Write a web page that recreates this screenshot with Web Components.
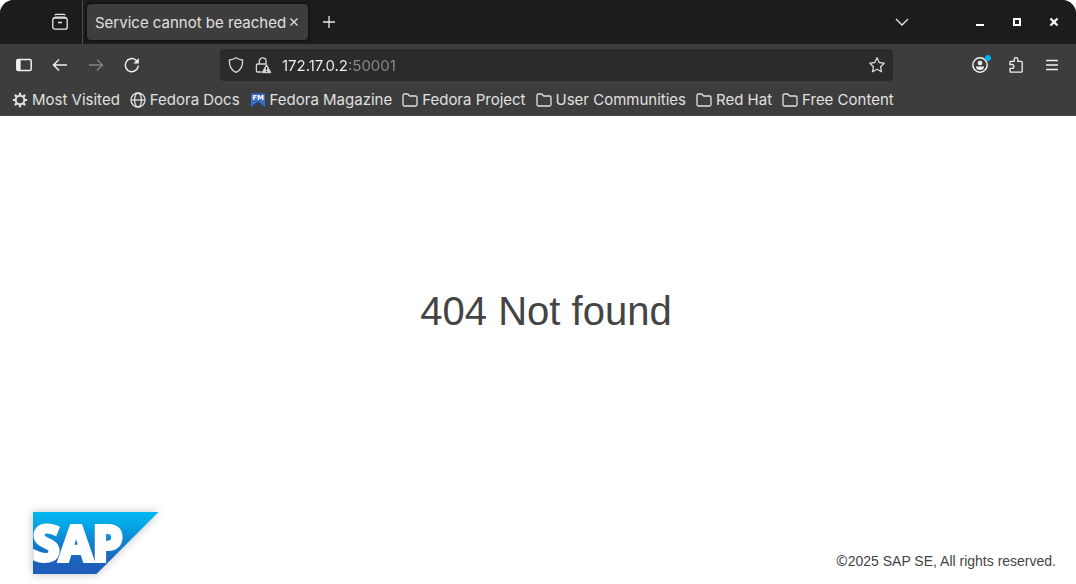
<!DOCTYPE html>
<html lang="en">
<head>
<meta charset="utf-8">
<title>Service cannot be reached</title>
<style>
  html, body { margin: 0; background: #fff; }
  body { min-height: 100vh; display: flex; flex-direction: column; }
  error-page { flex: 1; }
  .mark { font-family: "Noto Sans", sans-serif; }
</style>
</head>
<body>
<browser-chrome></browser-chrome>
<error-page>404 Not found<span slot="legal"><span class="mark">©</span>2025 SAP SE, All rights reserved.</span></error-page>

<script>
const ICONS = {
  view: '<path d="M3 1.300q.3-1 1.500-1h7q1.200 0 1.500 1"/><rect x=".8" y="4" width="14.400" height="11.200" rx="2"/><path d="M1.500 4.500q.6-1.300 2.200-1.300h8.600q1.600 0 2.200 1.300M6 8.500h4"/>',
  close: '<path d="M4.500 4.500l7 7M11.500 4.500l-7 7"/>',
  plus: '<path d="M8 2v12M2 8h12"/>',
  chevron: '<path d="M2 5l6 6 6-6"/>',
  minimize: '<path d="M4 11h8" stroke-width="2"/>',
  maximize: '<rect x="5" y="5" width="6" height="6" stroke-width="2"/>',
  exit: '<path d="M4.500 4.500l7 7M11.500 4.500l-7 7" stroke-width="2.200"/>',
  sidebar: '<rect x=".8" y="2.500" width="14.400" height="11" rx="1.500" stroke-width="1.500"/><path d="M1.500 3.500h2.500v9H1.500z" fill="currentColor"/>',
  back: '<path d="M15 8H1.500M7 2.500L1.500 8 7 13.500" stroke-width="1.500"/>',
  forward: '<path d="M1 8h13.500M9 2.500L14.500 8 9 13.500"/>',
  reload: '<path d="M14.300 8.500A6.500 6.500 0 1 1 11.800 3l2 2" stroke-width="1.500"/><path d="M14.800 1v5.500h-5.500z" fill="currentColor" stroke="none"/>',
  shield: '<path d="M8 .8c2 1.400 4.200 2 6.600 2.200.4 5.800-1.900 10.200-6.600 12.400C3.300 13.200 1 8.800 1.400 3 3.800 2.800 6 2.200 8 .8z"/>',
  lock: '<path d="M4.300 7V4.200a3.400 3.400 0 0 1 6.800 0V7M6.500 15H2.600q-1.200 0-1.200-1.200V8.300Q1.400 7 2.600 7h8.600"/><path d="M11.500 7.600l4.400 8.100H7.100z" fill="currentColor" stroke="currentColor" stroke-width="1" stroke-linejoin="round"/><path d="M11.500 9.900v3M11.500 13.900v1.200" stroke="#2b2b2b" stroke-width="1.300"/>',
  star: '<path d="M8 .8l2.200 4.700 5 .7-3.600 3.500.9 5.100L8 12.300l-4.500 2.500.9-5.100L.8 6.200l5-.7z" stroke-linejoin="round"/>',
  account: '<circle cx="8" cy="8" r="7.200" stroke-width="1.500"/><circle cx="8" cy="6" r="2.300" fill="currentColor" stroke="none"/><path d="M4 9.500h8q0 3.500-4 3.500t-4-3.500z" fill="currentColor" stroke="none"/><circle cx="16" cy="1" r="3" fill="#00b3f4" stroke="none"/>',
  puzzle: '<path d="M2 14.500V11.300h2a1.900 1.900 0 0 0 0-3.800H2V5.200q0-.8.800-.8h3.400V2.500a1.800 1.800 0 0 1 3.600 0v1.900h3.500q.9 0 .9.900v8.900q0 .9-.9.900H2.800q-.8 0-.8-.600z"/>',
  menu: '<path d="M2 3.500h12M2 8h12M2 12.500h12"/>',
  gear: '<circle cx="8" cy="8" r="4.300" stroke-width="2"/><path d="M8 .8v2.400M8 12.800v2.400M.8 8h2.400M12.800 8h2.400M2.900 2.900l1.700 1.700M11.400 11.400l1.700 1.700M2.900 13.100l1.700-1.700M11.400 4.600l1.700-1.700" stroke-width="2.200"/>',
  globe: '<circle cx="8" cy="8" r="7"/><ellipse cx="8" cy="8" rx="3.400" ry="7"/><path d="M1 8h14"/>',
  folder: '<path d="M1 12.500v-9q0-1.500 1.500-1.500h3.200l2 2h5.800q1.500 0 1.500 1.500v7q0 1.500-1.500 1.500h-11Q1 14 1 12.500z"/>',
  magazine: '<path d="M1 1h14v14l-2-1-5-4.500L3 14l-2 1z" fill="#3a6cbf" stroke="none"/><path d="M1 15l7-5.500 7 5.500-1 .5-6-4.500-6 4.500z" fill="#20407c" stroke="none"/><path d="M1 1.500h14" stroke="#2d56a0"/><text x="8" y="8" text-anchor="middle" fill="#fff" stroke="none" font-family="DejaVu Sans, sans-serif" font-weight="700" font-size="7">FM</text>'
};

function define(name, markup, setup) {
  const template = document.createElement('template');
  template.innerHTML = markup;
  customElements.define(name, class extends HTMLElement {
    constructor() {
      super();
      this.attachShadow({ mode: 'open' }).append(template.content.cloneNode(true));
    }
    connectedCallback() { if (setup) setup(this, this.shadowRoot); }
  });
}

define('ui-icon', `
  <style>
    :host { display: block; width: 16px; height: 16px; flex: none; }
    svg { display: block; overflow: visible; }
  </style>
  <svg width="16" height="16" viewBox="0 0 16 16" fill="none" stroke="currentColor" stroke-width="1.300" aria-hidden="true"></svg>`,
  (el, root) => { root.querySelector('svg').innerHTML = ICONS[el.getAttribute('name')] || ''; });

define('icon-button', `
  <style>
    :host { display: block; flex: none; }
    button { display: flex; align-items: center; justify-content: center; width: var(--button-size, 32px); height: var(--button-size, 32px);
      padding: 0; border: 0; border-radius: 4px; background: none; color: inherit; }
    button:disabled { color: #818181; }
  </style>
  <button type="button"></button>`,
  (el, root) => {
    const button = root.querySelector('button');
    button.setAttribute('aria-label', el.getAttribute('label'));
    button.disabled = el.hasAttribute('disabled');
    button.innerHTML = '<ui-icon name="' + el.getAttribute('icon') + '"></ui-icon>';
  });

define('browser-tab', `
  <style>
    :host { display: flex; align-items: center; height: 36px; padding: 0 6px 0 8px; border-radius: 4px; background: #3d3d3d;
      box-shadow: 0 0 3px #000; --button-size: 16px; color: #e0e0e0; white-space: nowrap; }
  </style>
  <slot></slot><icon-button icon="close" label="Close tab"></icon-button>`);

define('tab-strip', `
  <style>
    :host { display: flex; align-items: center; height: 44px; padding: 0 4px 0 44px; background: #1c1c1c; color: #e8e8e8; border-radius: 14px 14px 0 0; }
    hr { width: 1px; height: 44px; margin: 0 4px 0 6px; border: 0; background: #4a4a4a; }
    .add { margin-left: 5px; }
    .list { margin-left: auto; margin-right: 46px; }
    .window { display: flex; gap: 5px; padding-right: 2px; color: #fff; }
  </style>
  <icon-button icon="view" label="View recent browsing"></icon-button>
  <hr>
  <browser-tab>Service cannot be reached</browser-tab>
  <icon-button class="add" icon="plus" label="New tab"></icon-button>
  <icon-button class="list" icon="chevron" label="List all tabs"></icon-button>
  <div class="window">
    <icon-button icon="minimize" label="Minimize"></icon-button>
    <icon-button icon="maximize" label="Maximize"></icon-button>
    <icon-button icon="exit" label="Close"></icon-button>
  </div>`);

define('address-bar', `
  <style>
    :host { display: flex; align-items: center; height: 32px; min-width: 0; padding: 0 8px; border-radius: 4px; background: #2b2b2b; color: #d5d5d5; }
    ui-icon + ui-icon { margin-left: 11px; }
    input { flex: 1; min-width: 0; height: 32px; margin-left: 11px; padding: 0; border: 0; outline: 0; font: 15px Inter, sans-serif;
      color: transparent; background: linear-gradient(90deg, #f4f4f4 65px, #8b8b8b 65px); -webkit-background-clip: text; background-clip: text; }
  </style>
  <ui-icon name="shield"></ui-icon><ui-icon name="lock"></ui-icon>
  <input type="text" aria-label="Address" value="172.17.0.2:50001" spellcheck="false">
  <ui-icon name="star"></ui-icon>`);

define('nav-bar', `
  <style>
    :host { display: flex; align-items: center; height: 42px; padding: 0 8px; color: #f0f0f0; }
    .group { display: flex; gap: 4px; }
    address-bar { flex: 1; margin: 0 71px 0 72px; }
  </style>
  <div class="group">
    <icon-button icon="sidebar" label="Sidebar"></icon-button>
    <icon-button icon="back" label="Back"></icon-button>
    <icon-button icon="forward" label="Forward" disabled></icon-button>
    <icon-button icon="reload" label="Reload"></icon-button>
  </div>
  <address-bar></address-bar>
  <div class="group">
    <icon-button icon="account" label="Account"></icon-button>
    <icon-button icon="puzzle" label="Extensions"></icon-button>
    <icon-button icon="menu" label="Menu"></icon-button>
  </div>`);

define('bookmark-item', `
  <style>
    :host { display: block; white-space: nowrap; }
    a { display: flex; align-items: center; gap: 4px; color: inherit; text-decoration: none; }
  </style>
  <a href="#"><slot></slot></a>`,
  (el, root) => {
    const icon = document.createElement('ui-icon');
    icon.setAttribute('name', el.getAttribute('icon'));
    root.querySelector('a').prepend(icon);
  });

define('bookmarks-bar', `
  <style>
    :host { display: flex; align-items: center; gap: 10px; height: 27px; padding: 0 12px 2px; border-bottom: 1px solid #4a4a4a; color: #e0e0e0; overflow: hidden; }
  </style>
  <bookmark-item icon="gear">Most Visited</bookmark-item>
  <bookmark-item icon="globe">Fedora Docs</bookmark-item>
  <bookmark-item icon="magazine">Fedora Magazine</bookmark-item>
  <bookmark-item icon="folder">Fedora Project</bookmark-item>
  <bookmark-item icon="folder">User Communities</bookmark-item>
  <bookmark-item icon="folder">Red Hat</bookmark-item>
  <bookmark-item icon="folder">Free Content</bookmark-item>`);

define('browser-chrome', `
  <style>:host { display: block; border-radius: 14px 14px 0 0; background: #3d3d3d; font: 15px Inter, sans-serif; }</style>
  <tab-strip></tab-strip><nav-bar></nav-bar><bookmarks-bar></bookmarks-bar>`);

define('sap-logo', `
  <style>
    :host { display: block; flex: none; }
    svg { display: block; overflow: visible; filter: drop-shadow(0 0 4px rgba(0, 0, 0, .25)); }
    text { font: 700 48px "Open Sans", sans-serif; }
  </style>
  <svg width="125" height="62" viewBox="0 0 125 62" role="img" aria-label="SAP">
    <defs><linearGradient id="blue" x1="0" y1="0" x2="0" y2="1">
      <stop offset="0" stop-color="#00b8f1"/><stop offset=".22" stop-color="#06a5e5"/><stop offset=".5" stop-color="#117fcf"/><stop offset=".8" stop-color="#1d61bc"/><stop offset="1" stop-color="#1f5cb8"/>
    </linearGradient></defs>
    <path d="M0 0h125.500L63.500 62H0z" fill="url(#blue)"/>
    <text x="0" y="49" fill="#fff" stroke="#fff" stroke-width="4">SAP</text>
  </svg>`);

define('error-page', `
  <style>
    :host { display: flex; flex-direction: column; color: #444; font-family: "Liberation Sans", Arial, sans-serif; }
    main { flex: 1; display: flex; align-items: center; justify-content: center; padding: 0 0 6px 16px; }
    h1 { margin: 0; font-size: 40px; line-height: 48px; font-weight: 400; }
    footer { display: flex; align-items: flex-end; justify-content: space-between; padding: 0 20px 10px 33px; }
    p { margin: 0; padding-bottom: 3px; font-size: 14px; line-height: 20px; }
  </style>
  <main><h1><slot></slot></h1></main>
  <footer><sap-logo></sap-logo><p><slot name="legal"></slot></p></footer>`);
</script>
</body>
</html>
